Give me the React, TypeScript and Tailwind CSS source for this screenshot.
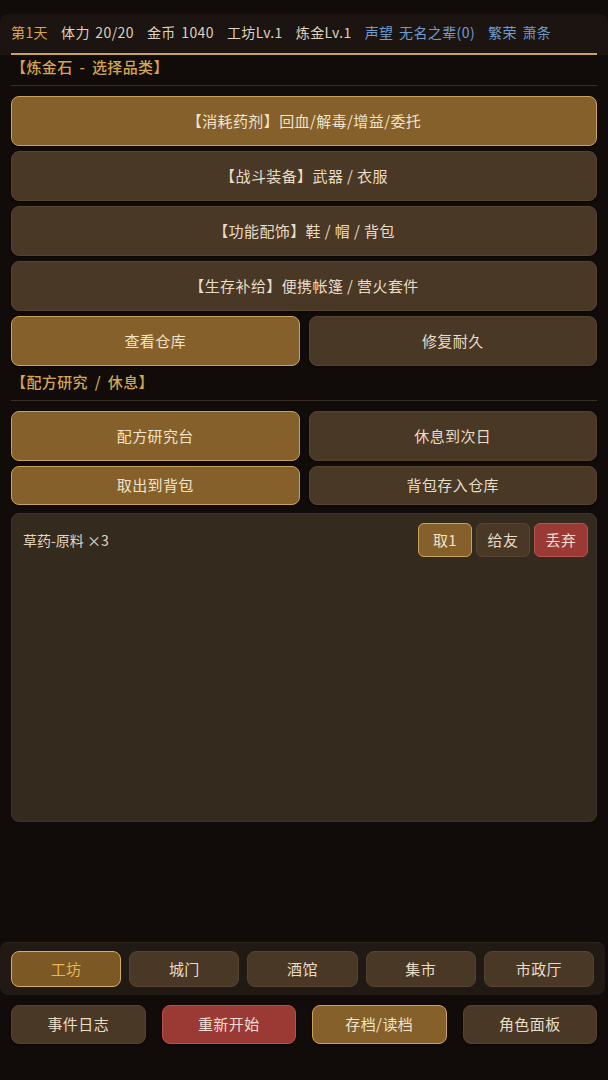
import React from "react";

const gold = "bg-[#86602a] border-[#c9a25c] text-[#f0e4ca]";
const brown = "bg-[#4a3827] border-[#564330] text-[#e8dcc6]";
const red = "bg-[#9b3a35] border-[#b5534d] text-[#f2ded4]";

function Btn({ label, tone, h = "h-[50px]" }: { label: string; tone: string; h?: string }) {
    return (
        <button className={`${h} ${tone} border-[1.5px] rounded-lg text-[15px] flex items-center justify-center shadow-[0_1px_2px_rgba(0,0,0,0.5)]`}>
            {label}
        </button>
    );
}

function SectionTitle({ text, top }: { text: string; top: string }) {
    return (
        <div className={`px-[11px] ${top}`}>
            <div className="leading-[20px] pb-[8px] text-[15px] font-medium text-[#d4a552]">{text}</div>
            <div className="h-px bg-[#3a2f25]" />
        </div>
    );
}

export default function App() {
    const tabs = ["工坊", "城门", "酒馆", "集市", "市政厅"];

    return (
        <div
            className="h-[1080px] w-[608px] bg-[#110c09] flex flex-col overflow-hidden tracking-[0.4px] [word-spacing:3px]"
            style={{ fontFamily: '"Noto Sans CJK SC", "Noto Sans", sans-serif' }}
        >
            {/* Header */}
            <div className="pt-[14px]">
                <div className="bg-[#1b1410] rounded-t-lg">
                    <div className="mx-[11px] h-[41px] flex items-center gap-[13px] text-[14px] border-b-2 border-[#c9a25c] pb-[2px] [word-spacing:2px]">
                        <span className="text-[#d9a84e]">第1天</span>
                        <span className="text-[#ddd2bf]">体力 20/20</span>
                        <span className="text-[#ddd2bf]">金币 1040</span>
                        <span className="text-[#ddd2bf]">工坊Lv.1</span>
                        <span className="text-[#ddd2bf]">炼金Lv.1</span>
                        <span className="text-[#6e9ccd]">声望 无名之辈(0)</span>
                        <span className="text-[#6e9ccd]">繁荣 萧条</span>
                    </div>
                </div>
            </div>

            <SectionTitle text="【炼金石 - 选择品类】" top="pt-[2px]" />

            <div className="px-[11px] pt-[10px] flex flex-col gap-[5px]">
                <Btn label="【消耗药剂】回血/解毒/增益/委托" tone={gold} />
                <Btn label="【战斗装备】武器 / 衣服" tone={brown} />
                <Btn label="【功能配饰】鞋 / 帽 / 背包" tone={brown} />
                <Btn label="【生存补给】便携帐篷 / 营火套件" tone={brown} />
                <div className="grid grid-cols-2 gap-[9px]">
                    <Btn label="查看仓库" tone={gold} />
                    <Btn label="修复耐久" tone={brown} />
                </div>
            </div>

            <SectionTitle text="【配方研究 / 休息】" top="pt-[6px]" />

            <div className="px-[11px] pt-[10px] flex flex-col gap-[5px]">
                <div className="grid grid-cols-2 gap-[9px]">
                    <Btn label="配方研究台" tone={gold} />
                    <Btn label="休息到次日" tone={brown} />
                </div>
                <div className="grid grid-cols-2 gap-[9px]">
                    <Btn label="取出到背包" tone={gold} h="h-[39px]" />
                    <Btn label="背包存入仓库" tone={brown} h="h-[39px]" />
                </div>
            </div>

            {/* Inventory panel */}
            <div className="mx-[11px] mt-[8px] h-[309px] bg-[#352a1e] border border-[#3f3327] rounded-lg pl-[11px] pr-[8px] pt-[9px]">
                <div className="flex items-center justify-between">
                    <span className="text-[14px] text-[#e2d6c2] tracking-normal [word-spacing:0px]">草药-原料 ×3</span>
                    <div className="flex gap-[4px]">
                        <button className={`${gold} w-[54px] h-[34px] border-[1.5px] rounded-md text-[15px]`}>取1</button>
                        <button className={`${brown} w-[54px] h-[34px] border-[1.5px] rounded-md text-[15px]`}>给友</button>
                        <button className={`${red} w-[54px] h-[34px] border-[1.5px] rounded-md text-[15px]`}>丢弃</button>
                    </div>
                </div>
            </div>

            {/* Bottom nav */}
            <div className="mt-auto">
                <div className="bg-[#211a14] border-t border-[#2e251d] rounded-lg mr-[3px] px-[11px] py-[8px] grid grid-cols-5 gap-[8px]">
                    {tabs.map((t, i) =>
                        i === 0 ? (
                            <button key={t} className="h-[36px] rounded-lg border-[1.5px] border-[#d6ad5a] bg-[#7c5825] text-[#e8b54e] text-[15px]">
                                {t}
                            </button>
                        ) : (
                            <button key={t} className={`h-[36px] rounded-lg border-[1.5px] ${brown} text-[15px]`}>
                                {t}
                            </button>
                        )
                    )}
                </div>
                <div className="px-[11px] pt-[10px] pb-[36px] grid grid-cols-4 gap-[16px]">
                    <Btn label="事件日志" tone={brown} h="h-[39px]" />
                    <Btn label="重新开始" tone={red} h="h-[39px]" />
                    <Btn label="存档/读档" tone={gold} h="h-[39px]" />
                    <Btn label="角色面板" tone={brown} h="h-[39px]" />
                </div>
            </div>
        </div>
    );
}
